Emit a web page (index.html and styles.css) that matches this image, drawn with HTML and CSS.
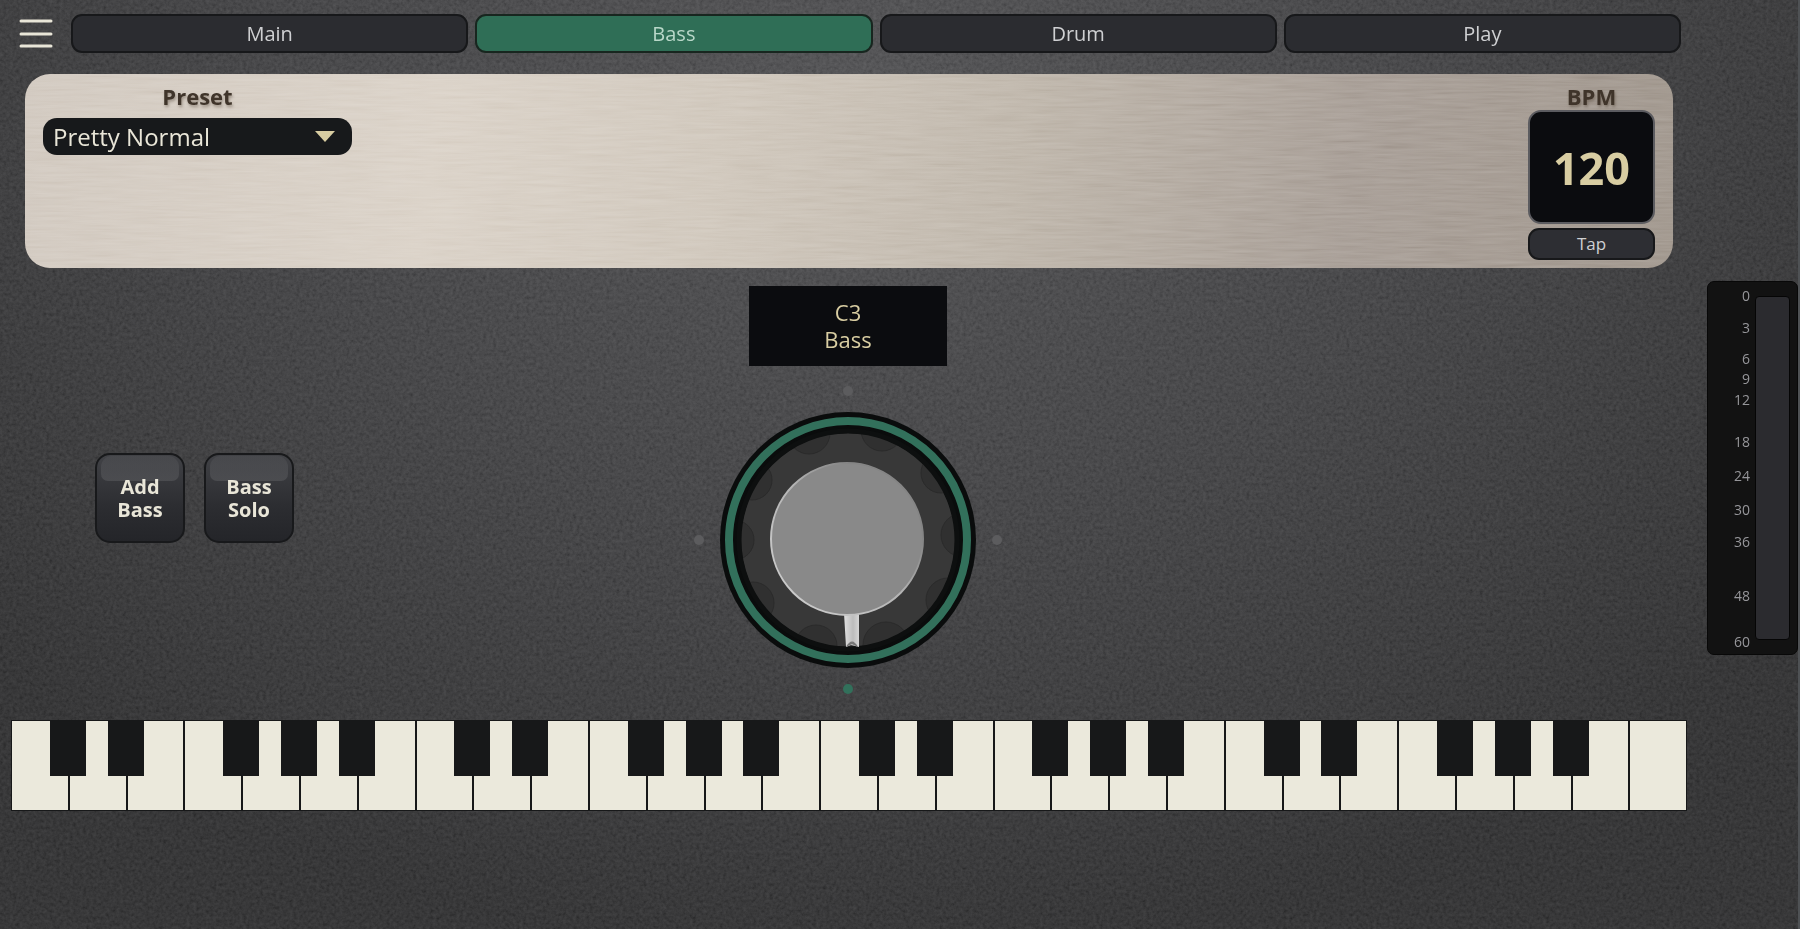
FILE: index.html
```html
<!DOCTYPE html>
<html lang="en">
  <head>
    <title>Bass</title>
    <meta charset="UTF-8">
    <meta name="viewport" content="width=device-width, initial-scale=1.0">
    <link rel="stylesheet" href="styles.css">
  </head>
  <body>
    <!-- Background grain -->
    <svg class="grain" aria-hidden="true">
      <filter id="leather">
        <feTurbulence type="fractalNoise" baseFrequency="0.3" numOctaves="3" seed="4"/>
        <feColorMatrix type="saturate" values="0"/>
        <feComponentTransfer><feFuncA type="linear" slope="0" intercept="1"/></feComponentTransfer>
      </filter>
      <rect width="100%" height="100%" filter="url(#leather)"/>
    </svg>

    <main class="main">
      <header class="topbar">
        <button class="menu-button" type="button" aria-label="Menu">
          <svg width="34" height="30" viewBox="0 0 34 30">
            <path d="M2 2H32M2 15H32M2 27H32" stroke="#e9e6d8" stroke-width="3" stroke-linecap="round"/>
          </svg>
        </button>
        <nav class="tabs">
          <button type="button">Main</button>
          <button type="button" class="active">Bass</button>
          <button type="button">Drum</button>
          <button type="button">Play</button>
        </nav>
      </header>

      <section class="panel">
        <svg class="brushed" aria-hidden="true">
          <filter id="brush">
            <feTurbulence type="fractalNoise" baseFrequency="0.02 0.4" numOctaves="3" seed="8"/>
            <feColorMatrix type="saturate" values="0"/>
            <feComponentTransfer><feFuncA type="linear" slope="0" intercept="1"/></feComponentTransfer>
          </filter>
          <rect width="100%" height="100%" filter="url(#brush)"/>
        </svg>
        <div class="preset">
          <label for="preset">Preset</label>
          <div class="select-wrap">
            <select id="preset">
              <option>Pretty Normal</option>
            </select>
            <svg class="arrow" width="20" height="11" viewBox="0 0 20 11"><path d="M0 0H20L10 11Z" fill="#d8cda2"/></svg>
          </div>
        </div>
        <div class="tempo">
          <label for="bpm">BPM</label>
          <input id="bpm" type="text" inputmode="numeric" value="120">
          <button id="tapButton" type="button">Tap</button>
        </div>
      </section>

      <section class="stage">
        <div class="pads">
          <button type="button">Add<br>Bass</button>
          <button type="button">Bass<br>Solo</button>
        </div>
        <div class="voice">
          <output class="display" for="voiceKnob">C3<br>Bass</output>
          <div class="knob">
            <svg viewBox="-154 -154 308 308" aria-hidden="true">
              <defs>
                <clipPath id="knobClip"><circle r="107"/></clipPath>
                <linearGradient id="rim" x1="0" y1="1" x2="1" y2="0">
                  <stop offset="0" stop-color="#d2d2d2"/>
                  <stop offset="0.5" stop-color="#b4b4b4"/>
                  <stop offset="0.75" stop-color="#858585"/>
                </linearGradient>
                <linearGradient id="pointer">
                  <stop offset="0" stop-color="#e0e0e0"/>
                  <stop offset="0.6" stop-color="#bcbcbc"/>
                  <stop offset="1" stop-color="#d6d6d6"/>
                </linearGradient>
              </defs>
              <circle class="dot" cy="-149" r="5"/>
              <circle class="dot" cx="-149" r="5"/>
              <circle class="dot" cx="149" r="5"/>
              <circle class="dot on" cy="149" r="5"/>
              <circle r="128" fill="#0a0c0c"/>
              <circle r="119" fill="none" stroke="#32705b" stroke-width="8"/>
              <circle r="107" fill="#383838"/>
              <g clip-path="url(#knobClip)" fill="#303030" stroke="#2b2b2b">
                <circle cx="-39" cy="-107" r="21"/>
                <circle cx="34" cy="-110" r="21"/>
                <circle cx="93" cy="-67" r="20"/>
                <circle cx="115" cy="-5" r="22"/>
                <circle cx="100" cy="60" r="22"/>
                <circle cx="38" cy="105" r="23"/>
                <circle cx="-32" cy="106" r="21"/>
                <circle cx="-95" cy="63" r="21"/>
                <circle cx="-114" cy="0" r="20"/>
                <circle cx="-96" cy="-60" r="20"/>
              </g>
              <circle r="109" fill="none" stroke="#0d0f0f" stroke-width="5"/>
              <path d="M-4 73H11L11 107L3 105L-2 107Z" fill="url(#pointer)"/>
              <path d="M-2 107Q4 96 10 107L4 104Z" fill="#777"/>
              <circle cx="-1" cy="-1" r="76" fill="#898989" stroke="url(#rim)" stroke-width="2"/>
            </svg>
            <input id="voiceKnob" type="range" min="0" max="3" value="2" aria-label="Bass voice">
          </div>
        </div>
      </section>

      <div id="keyboard" class="keyboard"></div>
    </main>

    <aside class="meter">
      <ol class="scale">
        <li>0</li>
        <li>3</li>
        <li>6</li>
        <li>9</li>
        <li>12</li>
        <li>18</li>
        <li>24</li>
        <li>30</li>
        <li>36</li>
        <li>48</li>
        <li>60</li>
      </ol>
      <div class="level"></div>
    </aside>

    <script>
    // four octaves, C to C
    const whiteKeys = 29;
    const hasSharp = [true, true, false, true, true, true, false];
    const keyboard = document.getElementById('keyboard');

    for (let i = 0; i < whiteKeys; i++) {
        let html = '<div class="key"><button type="button" class="white" aria-label="White key ' + (i + 1) + '"></button>';
        if (hasSharp[i % 7] && i < whiteKeys - 1) {
            html += '<button type="button" class="black" aria-label="Black key ' + (i + 1) + '"></button>';
        }
        html += '</div>';
        keyboard.innerHTML += html;
    }
    </script>
  </body>
</html>
```
FILE: styles.css
```css
* {
    box-sizing: border-box;
}
body {
    margin: 0;
    min-height: 100vh;
    display: flex;
    align-items: flex-start;
    font-family: "Open Sans", "Noto Sans", sans-serif;
    font-weight: 500;
    color: #cfd0d2;
    background: radial-gradient(ellipse 65% 95% at 48% 8%, #49494b 0%, #3c3c3e 50%, #2b2b2c 100%) #2b2b2c;
    border-right: 2px solid #4f5255;
}
button,
input,
select {
    font-family: inherit;
    font-weight: inherit;
    color: inherit;
    margin: 0;
    padding: 0;
    border: none;
    cursor: pointer;
}
.grain {
    position: fixed;
    inset: 0;
    width: 100%;
    height: 100%;
    z-index: -1;
    opacity: 0.45;
    mix-blend-mode: soft-light;
}
.main {
    flex: 1;
    min-width: 0;
    padding: 14px 20px 0 11px;
}

/* top bar */
.topbar {
    display: flex;
    align-items: center;
    gap: 18px;
    padding: 0 6px 0 8px;
}
.menu-button {
    background: none;
    height: 30px;
}
.menu-button svg {
    display: block;
}
.tabs {
    flex: 1;
    display: flex;
    gap: 7px;
}
.tabs button {
    flex: 1;
    height: 39px;
    font-size: 20px;
    line-height: 24px;
    background-color: #2b2c30;
    border: 2px solid #17181a;
    border-radius: 11px;
}
.tabs button.active {
    background-color: #2f6e56;
    border-color: #18261f;
    color: #b9d8c9;
}

/* brushed metal panel */
.panel {
    position: relative;
    display: flex;
    justify-content: space-between;
    min-height: 194px;
    margin: 21px 14px 0;
    padding: 8px 18px;
    border-radius: 25px;
    overflow: hidden;
    background: linear-gradient(98deg, #cec5bb 0%, #d8cfc4 25%, #cdc4b8 42%, #bbb2a6 60%, #a29890 80%, #9b9187 100%);
}
.brushed {
    position: absolute;
    inset: 0;
    width: 100%;
    height: 100%;
    opacity: 0.45;
    mix-blend-mode: soft-light;
}
.panel label {
    font-size: 22px;
    font-weight: bold;
    line-height: 28px;
    text-align: center;
    color: #3f342a;
    text-shadow: 1px 2px 3px rgba(60, 45, 30, 0.4);
}
.preset,
.tempo {
    position: relative;
    display: flex;
    flex-direction: column;
}
.preset {
    width: 309px;
}
.select-wrap {
    position: relative;
    margin-top: 8px;
}
.select-wrap select {
    appearance: none;
    width: 100%;
    height: 37px;
    padding: 0 10px;
    font-size: 24px;
    line-height: 32px;
    color: #e9e6d8;
    background-color: #17191b;
    border-radius: 14px;
}
.arrow {
    position: absolute;
    right: 17px;
    top: 13px;
    pointer-events: none;
}
.tempo {
    width: 127px;
}
.tempo input {
    width: 100%;
    height: 114px;
    font-size: 45px;
    font-weight: bold;
    text-align: center;
    color: #d8cda2;
    background-color: #0b0c0f;
    border: 2px solid #5c5c60;
    border-radius: 13px;
}
.tempo button {
    height: 32px;
    margin-top: 4px;
    font-size: 17px;
    line-height: 20px;
    background-color: #2d2e33;
    border: 2px solid #17181a;
    border-radius: 11px;
}

/* pads, display and knob */
.stage {
    display: grid;
    grid-template-columns: 1fr auto 1fr;
    padding: 18px 2px 0 0;
}
.pads {
    display: flex;
    align-items: flex-start;
    gap: 19px;
    padding: 167px 0 0 84px;
}
.pads button {
    position: relative;
    width: 90px;
    height: 90px;
    font-size: 20px;
    font-weight: bold;
    line-height: 23px;
    color: #e9e6d8;
    background: linear-gradient(#414246, #2c2d31 60%, #242529);
    border: 2px solid #18191b;
    border-radius: 15px;
}
.pads button::before {
    content: "";
    position: absolute;
    inset: 1px 4px auto;
    height: 25px;
    border-radius: 11px 11px 7px 7px;
    background: linear-gradient(rgba(255, 255, 255, 0.04), rgba(255, 255, 255, 0.1));
}
.voice {
    display: flex;
    flex-direction: column;
    align-items: center;
}
.display {
    width: 198px;
    height: 80px;
    padding-top: 13px;
    font-size: 22px;
    line-height: 27px;
    text-align: center;
    color: #d8cda2;
    background-color: #0b0c0f;
}
.knob {
    position: relative;
    width: 308px;
    height: 308px;
    margin: 20px 0 26px;
}
.knob svg {
    display: block;
}
.knob input {
    position: absolute;
    inset: 0;
    width: 100%;
    height: 100%;
    opacity: 0;
}
.dot {
    fill: #5c5c5e;
}
.dot.on {
    fill: #32705b;
}

/* keyboard */
.keyboard {
    display: flex;
    gap: 2px;
    height: 91px;
    border: 1px solid #171819;
    background-color: #171819;
}
.key {
    position: relative;
    flex: 1;
}
.white {
    display: block;
    width: 100%;
    height: 100%;
    background-color: #ebe9dc;
}
.black {
    position: absolute;
    top: 0;
    right: -18px;
    z-index: 1;
    width: 36px;
    height: 55px;
    background-color: #171819;
}

/* level meter */
.meter {
    display: flex;
    gap: 5px;
    width: 91px;
    height: 374px;
    margin-top: 281px;
    padding: 14px 7px 14px 12px;
    background-color: #121212;
    border: 1px solid #080808;
    border-radius: 7px;
}
.scale {
    flex: 1;
    display: grid;
    grid-template-rows: 32px 31px 20px 21px 42px 34px 34px 32px 54px 46px 16px;
    margin: -8px 0 0;
    padding: 0;
    list-style: none;
    font-size: 14px;
    line-height: 16px;
    text-align: right;
    color: #96969a;
}
.level {
    width: 35px;
    background-color: #2b2b2f;
    border: 1px solid #050505;
    border-radius: 4px;
}
```
